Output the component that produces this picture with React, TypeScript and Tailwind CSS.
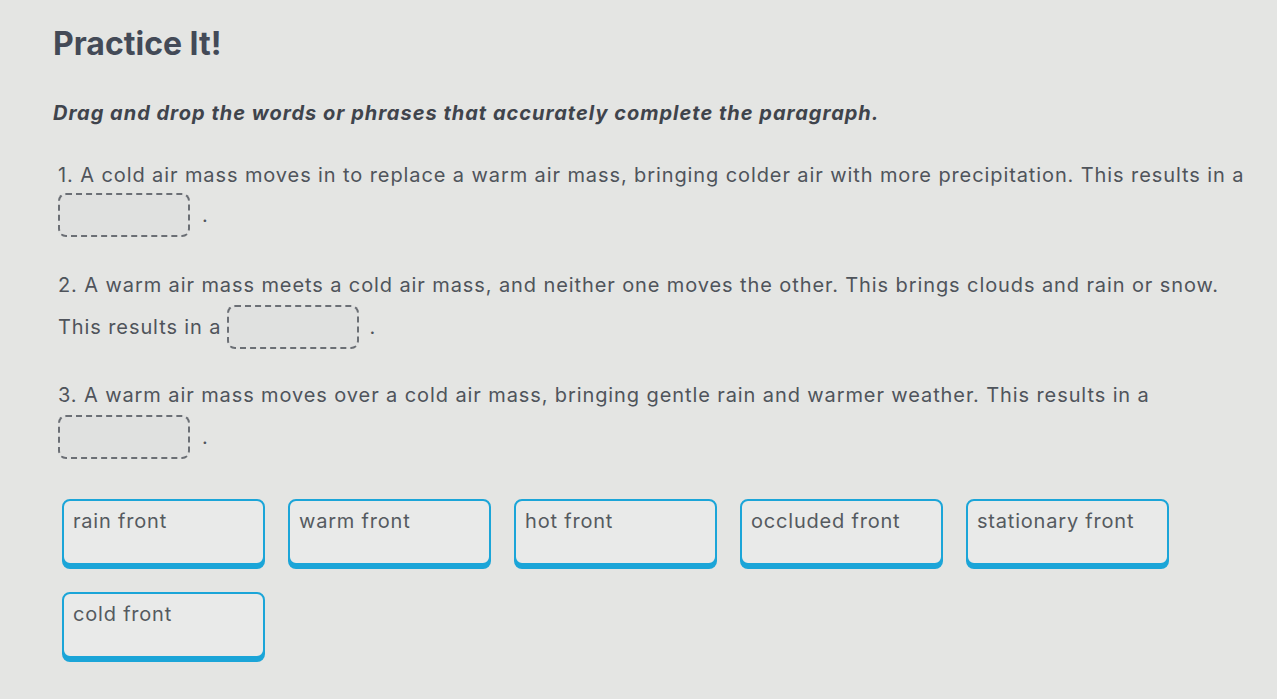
const words = ['rain front', 'warm front', 'hot front', 'occluded front', 'stationary front', 'cold front']

function Blank() {
  return <span className="inline-block h-[44px] w-[132px] rounded-lg border-2 border-dashed border-[#6b6f75] bg-[#e0e1e0]" />
}

function WordCard({ label }: { label: string }) {
  return (
    <div className="h-[66px] w-[203px] rounded-lg border-2 border-[#1ba5d8] bg-[#e9eae9] px-[9px] pt-[5px] text-[20px] tracking-[0.04em] text-[#555a60] shadow-[0_4px_0_#1ba5d8]">
      {label}
    </div>
  )
}

export default function App() {
  return (
    <div className="min-h-[699px] w-full bg-[#e4e5e3] pl-[53px] pt-[24px] font-['Inter',sans-serif] text-[#4f545b]">
      <h1 className="text-[32px] font-bold leading-[40px] text-[#434a57]">Practice It!</h1>
      <p className="mt-[35px] text-[20px] font-bold italic leading-[28px] tracking-[0.05em] text-[#3f444c]">
        Drag and drop the words or phrases that accurately complete the paragraph.
      </p>

      <div className="mt-[35px] pl-[5px] text-[20px] leading-[26px] tracking-[0.045em]">
        <div>
          <p className="whitespace-nowrap">1. A cold air mass moves in to replace a warm air mass, bringing colder air with more precipitation. This results in a</p>
          <div className="mt-[5px] flex items-center gap-[12px]">
            <Blank />
            <span>.</span>
          </div>
        </div>
        <div className="mt-[35px]">
          <p>2. A warm air mass meets a cold air mass, and neither one moves the other. This brings clouds and rain or snow.</p>
          <div className="mt-[7px] flex items-center gap-[6px]">
            <span>This results in a</span>
            <Blank />
            <span className="ml-[4px]">.</span>
          </div>
        </div>
        <div className="mt-[33px]">
          <p>3. A warm air mass moves over a cold air mass, bringing gentle rain and warmer weather. This results in a</p>
          <div className="mt-[7px] flex items-center gap-[12px]">
            <Blank />
            <span>.</span>
          </div>
        </div>
      </div>

      <div className="mt-[40px] grid w-[1120px] grid-cols-[repeat(5,203px)] gap-x-[23px] gap-y-[27px] pl-[9px]">
        {words.map((w) => (
          <WordCard key={w} label={w} />
        ))}
      </div>
    </div>
  )
}
